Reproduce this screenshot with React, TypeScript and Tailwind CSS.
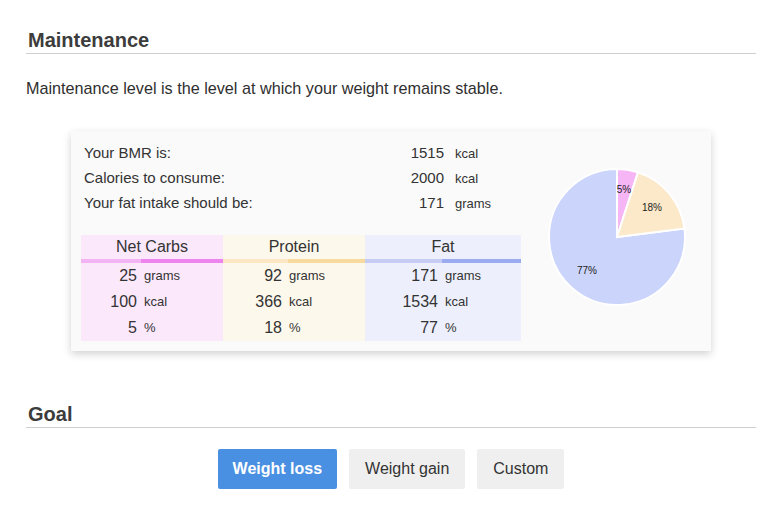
const font = { fontFamily: '"Liberation Sans", Arial, sans-serif' }

const summary = [
  { label: "Your BMR is:", value: "1515", unit: "kcal" },
  { label: "Calories to consume:", value: "2000", unit: "kcal" },
  { label: "Your fat intake should be:", value: "171", unit: "grams" },
]

const macros = [
  {
    name: "Net Carbs",
    col: "w-[142px] bg-[#fbe8fb]",
    numW: "w-[56px]",
    light: "w-[60px] bg-[#f3b4f3]",
    dark: "bg-[#ee84ee]",
    rows: [
      ["25", "grams"],
      ["100", "kcal"],
      ["5", "%"],
    ],
  },
  {
    name: "Protein",
    col: "w-[142px] bg-[#fdf8ec]",
    numW: "w-[59px]",
    light: "w-[65px] bg-[#fbe7c3]",
    dark: "bg-[#f6da9e]",
    rows: [
      ["92", "grams"],
      ["366", "kcal"],
      ["18", "%"],
    ],
  },
  {
    name: "Fat",
    col: "w-[156px] bg-[#edf0fc]",
    numW: "w-[73px]",
    light: "w-[77px] bg-[#c6ccf4]",
    dark: "bg-[#9babf0]",
    rows: [
      ["171", "grams"],
      ["1534", "kcal"],
      ["77", "%"],
    ],
  },
]

function SectionTitle({ children }: { children: React.ReactNode }) {
  return (
    <div className="border-b border-[#cfcfcf]">
      <h2 className="px-0.5 text-[20px] leading-[25px] font-bold text-[#3c3c3c]">{children}</h2>
    </div>
  )
}

function Pie() {
  return (
    <svg width="140" height="140" viewBox="0 0 140 140">
      <path d="M70,70 L137.46,61.48 A68,68 0 1 1 70,2 Z" fill="#cbd4fb" stroke="#fff" strokeWidth="2" />
      <path d="M70,70 L70,2 A68,68 0 0 1 91.01,5.33 Z" fill="#f6b6f6" stroke="#fff" strokeWidth="2" />
      <path d="M70,70 L91.01,5.33 A68,68 0 0 1 137.46,61.48 Z" fill="#fbe9c9" stroke="#fff" strokeWidth="2" />
      <g fontSize="10" fill="#222" fontFamily="Liberation Sans, Arial, sans-serif" textAnchor="middle">
        <text x="77" y="26">5%</text>
        <text x="105" y="44">18%</text>
        <text x="40" y="107">77%</text>
      </g>
    </svg>
  )
}

export default function App() {
  return (
    <div className="min-h-[509px] bg-white px-[26px] pt-7 text-[#333]" style={font}>
      <SectionTitle>Maintenance</SectionTitle>
      <p className="mt-[22px] text-[16.2px] leading-6 text-[#2f2f2f]">
        Maintenance level is the level at which your weight remains stable.
      </p>

      <div className="mx-auto mt-[31px] flex w-[640px] bg-[#fafafa] p-[10px] shadow-[0_3px_8px_rgba(0,0,0,0.18)]">
        <div className="w-[440px]">
          {summary.map((r) => (
            <div key={r.label} className="flex h-[25px] items-center pl-[3px] text-[15px]">
              <span className="w-[300px]">{r.label}</span>
              <span className="w-[60px] text-right">{r.value}</span>
              <span className="ml-[11px] text-[13px]">{r.unit}</span>
            </div>
          ))}

          <div className="mt-[19px] flex">
            {macros.map((m) => (
              <div key={m.name} className={m.col}>
                <div className="h-6 text-center text-[16px] leading-6">{m.name}</div>
                <div className="flex h-1">
                  <div className={m.light} />
                  <div className={`flex-1 ${m.dark}`} />
                </div>
                {m.rows.map(([n, u]) => (
                  <div key={u} className="flex h-[26px] items-center">
                    <span className={`${m.numW} text-right text-[16px]`}>{n}</span>
                    <span className="ml-[7px] text-[13px]">{u}</span>
                  </div>
                ))}
              </div>
            ))}
          </div>
        </div>

        <div className="flex flex-1 items-center justify-center pb-2 pl-3">
          <Pie />
        </div>
      </div>

      <div className="mt-[51px]">
        <SectionTitle>Goal</SectionTitle>
      </div>

      <div className="mt-[21px] flex justify-center gap-3 text-[16px]">
        <button className="h-10 rounded-[2px] bg-[#4a90e2] px-[15px] font-bold text-white">Weight loss</button>
        <button className="h-10 rounded-[2px] bg-[#efefef] px-[16px] text-[#333]">Weight gain</button>
        <button className="h-10 rounded-[2px] bg-[#efefef] px-4 text-[#333]">Custom</button>
      </div>
    </div>
  )
}
